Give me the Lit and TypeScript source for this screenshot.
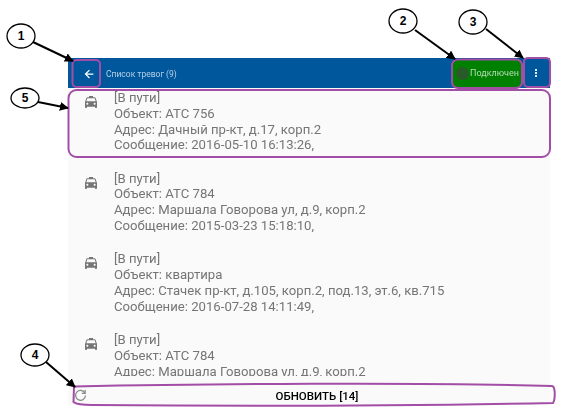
import { LitElement, html, css, svg } from "lit";
import { customElement } from "lit/decorators.js";

const TAXI =
  "M18.92 6.01C18.72 5.42 18.16 5 17.5 5H15V3H9v2H6.5c-.66 0-1.21.42-1.42 1.01L3 12v8c0 .55.45 1 1 1h1c.55 0 1-.45 1-1v-1h12v1c0 .55.45 1 1 1h1c.55 0 1-.45 1-1v-8l-2.08-5.99zM6.5 16c-.83 0-1.5-.67-1.5-1.5S5.67 13 6.5 13s1.5.67 1.5 1.5S7.33 16 6.5 16zm11 0c-.83 0-1.5-.67-1.5-1.5s.67-1.5 1.5-1.5 1.5.67 1.5 1.5-.67 1.5-1.5 1.5zM5 11l1.5-4.5h11L19 11H5z";

const ALARMS = [
  { obj: "АТС 756", addr: "Дачный пр-кт, д.17, корп.2", msg: "2016-05-10 16:13:26," },
  { obj: "АТС 784", addr: "Маршала Говорова ул, д.9, корп.2", msg: "2015-03-23 15:18:10," },
  { obj: "квартира", addr: "Стачек пр-кт, д.105, корп.2, под.13, эт.6, кв.715", msg: "2016-07-28 14:11:49," },
  { obj: "АТС 784", addr: "Маршала Говорова ул, д.9, корп.2", msg: "" },
];

const CALLOUTS = [
  { n: "1", cx: 21, cy: 36, rx: 14, ry: 12, x1: 33, y1: 42, x2: 73, y2: 61 },
  { n: "2", cx: 403, cy: 21, rx: 14, ry: 12, x1: 415, y1: 30, x2: 455, y2: 59 },
  { n: "3", cx: 473, cy: 22, rx: 14, ry: 12, x1: 486, y1: 29, x2: 523, y2: 58 },
  { n: "4", cx: 35, cy: 355, rx: 14, ry: 11, x1: 46, y1: 362, x2: 75, y2: 387 },
  { n: "5", cx: 25, cy: 98, rx: 14, ry: 10, x1: 38, y1: 102, x2: 68, y2: 108 },
];

@customElement("app-root")
export class AppRoot extends LitElement {
  static styles = css`
    :host {
      display: block;
      position: relative;
      width: 570px;
      height: 413px;
      overflow: hidden;
      background: #fff;
      font-family: Roboto, "Noto Sans", sans-serif;
    }
    .page {
      padding: 58px 20px 8px 68px;
      height: 413px;
      box-sizing: border-box;
      display: flex;
      filter: blur(0.3px);
    }
    .frame {
      flex: 1;
      display: flex;
      flex-direction: column;
      background: #fafafa;
      min-width: 0;
    }
    .bar {
      height: 30px;
      flex: none;
      display: flex;
      align-items: center;
      background: #01579b;
      color: #b3cfe8;
      font-size: 8.5px;
    }
    .back {
      width: 38px;
      height: 30px;
      flex: none;
      display: flex;
      align-items: center;
      justify-content: center;
      padding-left: 4px;
      box-sizing: border-box;
    }
    .back svg {
      width: 10px;
      height: 10px;
      margin-top: 1px;
    }
    .title {
      flex: 1;
      margin-top: 1px;
    }
    .status {
      width: 70px;
      margin-right: 28px;
      height: 29px;
      flex: none;
      background: #008000;
      border-radius: 6px;
      display: flex;
      align-items: center;
      gap: 1px;
      padding-left: 4px;
      box-sizing: border-box;
      color: #b5dcb5;
      font-size: 9px;
      white-space: nowrap;
    }
    .dot {
      width: 13px;
      height: 13px;
      border-radius: 50%;
      background: #2a5a2a;
      flex: none;
    }
    .kebab {
      display: flex;
      flex-direction: column;
      gap: 1px;
      position: absolute;
      left: 535px;
      top: 69px;
    }
    .kebab i {
      width: 2px;
      height: 2px;
      background: #e3eef8;
    }
    .list {
      flex: 1;
      min-height: 0;
      overflow: hidden;
      padding-top: 2px;
      display: flex;
      flex-direction: column;
      gap: 17.7px;
    }
    .row {
      display: flex;
      flex: none;
      padding-left: 15px;
      gap: 15px;
      color: #757575;
      font-size: 13.15px;
      line-height: 15.75px;
    }
    .row svg {
      width: 16px;
      height: 16px;
      flex: none;
      margin-top: 4px;
      fill: #757575;
    }
    .row div {
      white-space: nowrap;
    }
    .foot {
      height: 29px;
      flex: none;
      position: relative;
      display: flex;
      align-items: flex-end;
      justify-content: center;
      padding: 0 0 1px 16px;
      box-sizing: border-box;
      background: #fafafa;
      color: #000;
      font-size: 11.5px;
      line-height: 16px;
      font-weight: 500;
    }
    .foot svg {
      position: absolute;
      left: 6px;
      top: 13px;
      width: 13px;
      height: 13px;
      fill: none;
      stroke: #8a8a8a;
      stroke-width: 1.4;
    }
    .marks {
      position: absolute;
      inset: 0;
      width: 570px;
      height: 413px;
      pointer-events: none;
    }
    .marks text {
      font: bold 12px "Liberation Sans", sans-serif;
      text-anchor: middle;
      fill: #000;
    }
  `;

  render() {
    return html`
      <div class="page">
        <div class="frame">
          <div class="bar">
            <div class="back">
              <svg viewBox="0 0 16 16"><path d="M15 7H4.8l4.6-4.6L8 1 1 8l7 7 1.4-1.4L4.8 9H15z" fill="#fff"/></svg>
            </div>
            <div class="title">Список тревог (9)</div>
            <div class="status"><span class="dot"></span>Подключен</div>
          </div>
          <div class="list">
            ${ALARMS.map(
              (a) => html`
                <div class="row">
                  <svg viewBox="0 0 24 24"><path d=${TAXI}></path></svg>
                  <div>
                    [В пути]<br />
                    Объект: ${a.obj}<br />
                    Адрес: ${a.addr}${a.msg ? html`<br />Сообщение: ${a.msg}` : ""}
                  </div>
                </div>
              `,
            )}
          </div>
          <div class="foot">
            <svg viewBox="0 0 14 14">
              <path d="M11.6 4.2A5.3 5.3 0 1 0 12.3 7"></path>
              <path d="M12 1.2v3.6H8.4"></path>
            </svg>
            ОБНОВИТЬ [14]
          </div>
        </div>
      </div>
      <div class="kebab"><i></i><i></i><i></i></div>
      <svg class="marks" viewBox="0 0 570 413">
        <defs>
          <marker id="ah" viewBox="0 0 10 10" refX="9" refY="5" markerWidth="4.5" markerHeight="4.5" orient="auto">
            <path d="M0 0L10 5L0 10z" fill="#000"></path>
          </marker>
        </defs>
        <g fill="none" stroke="#a34ea6" stroke-width="2">
          <rect x="72.5" y="60" width="27.5" height="27" rx="4"></rect>
          <rect x="452" y="59.5" width="70" height="28.5" rx="6"></rect>
          <rect x="524" y="58" width="26" height="29" rx="4"></rect>
          <rect x="68.5" y="90" width="481.5" height="67" rx="8"></rect>
          <path d="M74 386.5C200 384 420 382 552 386C556 387 555 400 553 403C400 406 200 406 92 405C85 405 76 404 73.5 402Z"></path>
        </g>
        ${CALLOUTS.map(
          (c) => svg`
            <line x1=${c.x1} y1=${c.y1} x2=${c.x2} y2=${c.y2} stroke="#000" stroke-width="2" marker-end="url(#ah)"></line>
            <ellipse cx=${c.cx} cy=${c.cy} rx=${c.rx} ry=${c.ry} fill="#fff" stroke="#000" stroke-width="1.3"></ellipse>
            <text x=${c.cx} y=${c.cy + 4}>${c.n}</text>
          `,
        )}
      </svg>
    `;
  }
}
